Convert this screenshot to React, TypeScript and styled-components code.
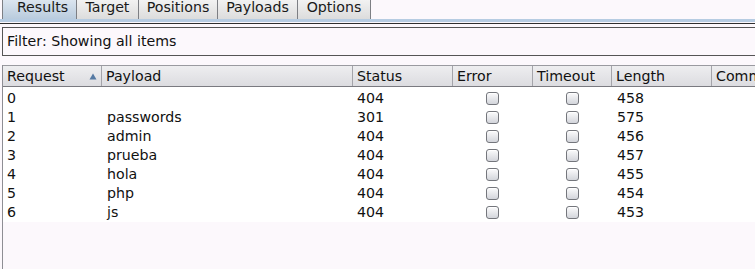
import React from 'react';
import styled, {createGlobalStyle} from 'styled-components';

const GlobalStyle = createGlobalStyle`
  html, body {
    margin: 0;
    padding: 0;
    background: #fcf8fc;
    overflow: hidden;
  }
  body {
    font-family: 'DejaVu Sans', 'Liberation Sans', sans-serif;
    font-size: 14.2px;
    color: #111;
  }
`;

const Page = styled.div`
  width: 755px;
  height: 269px;
  overflow: hidden;
  display: flex;
  flex-direction: column;
`;

const TabBar = styled.div`
  display: flex;
  height: 19px;
  padding-left: 2px;
`;

const Tab = styled.div<{$w: number; $active?: boolean}>`
  box-sizing: border-box;
  width: ${p => p.$w}px;
  height: 19px;
  line-height: 14px;
  display: flex;
  justify-content: center;
  padding-left: ${p => (p.$active ? 6 : 0)}px;
  border-right: 1px solid #7d7f84;
  border-left: ${p => (p.$active ? '1px solid #7d7f84' : 'none')};
  background: ${p =>
    p.$active
      ? 'linear-gradient(#dbe5ef, #b9cbdd)'
      : 'linear-gradient(#f2f2f2, #dcdcdc)'};
  color: #1a1a1a;
  white-space: nowrap;
`;

const TabBand = styled.div`
  height: 3px;
  background: #b6cce2;
`;

const PanelRule = styled.div`
  margin-top: 1px;
  height: 0;
  border-top: 1px solid #2e2e2e;
`;

const FilterBox = styled.div`
  margin: 3px 0 0 2px;
  height: 27px;
  line-height: 27px;
  padding-left: 4px;
  border: 1px solid #555;
  border-right: none;
  white-space: nowrap;
`;

const TablePane = styled.div`
  margin: 9px 0 0 2px;
  flex: 1;
  border-left: 1px solid #8e8e94;
  overflow: hidden;
`;

const cols = '99px 251px 100px 80px 79px 100px 100px';

const HeaderRow = styled.div`
  display: grid;
  grid-template-columns: ${cols};
  height: 20px;
  border-top: 1px solid #9a9aa0;
  border-bottom: 1px solid #7a7a80;
  background: linear-gradient(#eeeef0, #dcdce0);
`;

const HeaderCell = styled.div`
  display: flex;
  align-items: center;
  justify-content: space-between;
  line-height: 19px;
  padding: 0 4px;
  border-right: 1px solid #a4a4aa;
  white-space: nowrap;
  overflow: hidden;
`;

const Body = styled.div`
  padding-top: 2px;
  background: #ffffff;
`;

const Row = styled.div`
  display: grid;
  grid-template-columns: ${cols};
  height: 19px;
  line-height: 19px;
`;

const Cell = styled.div<{$center?: boolean; $pad?: number}>`
  display: flex;
  align-items: center;
  justify-content: ${p => (p.$center ? 'center' : 'flex-start')};
  padding-left: ${p => (p.$center ? 0 : p.$pad ?? 5)}px;
  padding-right: ${p => (p.$center ? 1 : 0)}px;
  white-space: nowrap;
`;

const Check = styled.span`
  box-sizing: border-box;
  width: 13px;
  height: 13px;
  border: 1px solid #74767c;
  border-radius: 3px;
  background: linear-gradient(#fbfbfc, #d3d5db);
  box-shadow: inset 0 1px 0 #ffffff;
`;

const SortArrow = () => (
  <svg width="8" height="7" viewBox="0 0 8 7">
    <polygon points="4,0.5 7.5,6.5 0.5,6.5" fill="#5579a3" />
  </svg>
);

const rows = [
  {id: 0, payload: '', status: 404, length: 458},
  {id: 1, payload: 'passwords', status: 301, length: 575},
  {id: 2, payload: 'admin', status: 404, length: 456},
  {id: 3, payload: 'prueba', status: 404, length: 457},
  {id: 4, payload: 'hola', status: 404, length: 455},
  {id: 5, payload: 'php', status: 404, length: 454},
  {id: 6, payload: 'js', status: 404, length: 453},
];

const tabs = [
  {label: 'Results', w: 75},
  {label: 'Target', w: 62},
  {label: 'Positions', w: 79},
  {label: 'Payloads', w: 80},
  {label: 'Options', w: 73},
];

export default function App() {
  return (
    <Page>
      <GlobalStyle />
      <TabBar>
        {tabs.map((t, i) => (
          <Tab key={t.label} $w={t.w} $active={i === 0}>
            {t.label}
          </Tab>
        ))}
      </TabBar>
      <TabBand />
      <PanelRule />
      <FilterBox>Filter: Showing all items</FilterBox>
      <TablePane>
        <HeaderRow>
          <HeaderCell>
            Request
            <SortArrow />
          </HeaderCell>
          <HeaderCell>Payload</HeaderCell>
          <HeaderCell>Status</HeaderCell>
          <HeaderCell>Error</HeaderCell>
          <HeaderCell>Timeout</HeaderCell>
          <HeaderCell>Length</HeaderCell>
          <HeaderCell>Comment</HeaderCell>
        </HeaderRow>
        <Body>
          {rows.map(r => (
            <Row key={r.id}>
              <Cell $pad={4}>{r.id}</Cell>
              <Cell>{r.payload}</Cell>
              <Cell $pad={4}>{r.status}</Cell>
              <Cell $center>
                <Check />
              </Cell>
              <Cell $center>
                <Check />
              </Cell>
              <Cell>{r.length}</Cell>
              <Cell />
            </Row>
          ))}
        </Body>
      </TablePane>
    </Page>
  );
}
